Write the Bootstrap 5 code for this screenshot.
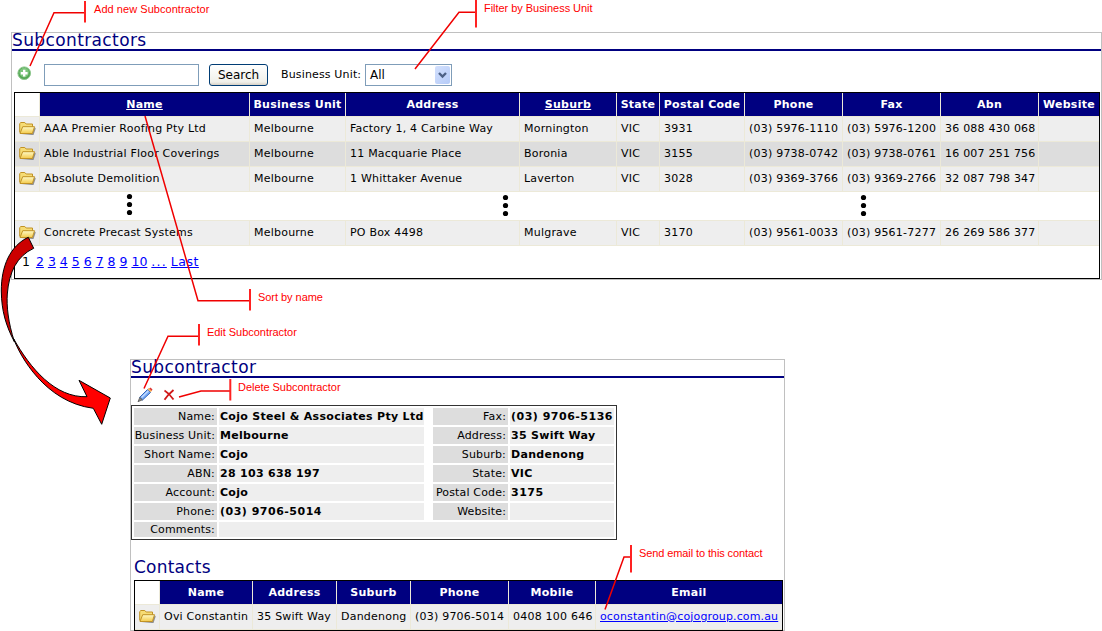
<!DOCTYPE html>
<html lang="en">
<head>
<meta charset="utf-8">
<title>Subcontractors</title>
<link href="https://cdn.jsdelivr.net/npm/bootstrap@5.3.0/dist/css/bootstrap.min.css" rel="stylesheet">
<style>
body{width:1102px;height:631px;overflow:hidden;background:#fff;color:#000;font:11px/14px "DejaVu Sans",sans-serif;letter-spacing:.22px}
a,.table a{color:#00f;text-decoration:underline;text-underline-offset:1px}
.panel{border:1px solid #c0c0c0}
.main-panel{width:1091px;height:248px;margin:32px 0 0 11px}
.sub-panel{width:655px;height:272px;margin:79px 0 0 130px}
.panel-title{font-size:17px;line-height:14px;height:18px;color:#000080;border-bottom:2px solid #000080;margin:0;font-weight:400;letter-spacing:.38px;white-space:nowrap}
.tools{height:41px;padding-left:5px}
.tool-row{height:22px;margin-top:7px}
.search-box{width:155px;height:22px;border:1px solid #7f9db9;border-radius:0;padding:0 3px;margin-left:12px}
.search-btn{width:59px;height:22px;margin-left:10px;padding:0;border:1px solid #003c74;border-radius:3px;background:linear-gradient(#fff,#f0f0ea 85%,#d6d0c5);font-size:12px;line-height:18px;color:#000;letter-spacing:0}
.unit-label{margin-left:13px;width:80px;letter-spacing:.15px;white-space:nowrap}
.unit-select{width:87px;height:22px;border:1px solid #7f9db9;margin-left:4px;padding:1px 1px 1px 4px;font-size:12px;letter-spacing:0}
.drop{width:15px;height:18px;border-radius:2px;background:linear-gradient(135deg,#d3e0fd,#b5cbf8)}
table.listing{table-layout:fixed;border-collapse:separate;border-spacing:0;border:1px solid #000;margin:0;color:#000}
table.listing>*>*>*{padding:0 0 1px 4px;border-width:0 1px 1px 0;border-style:solid;border-color:#ece9d8;vertical-align:middle;white-space:nowrap;height:25px;line-height:14px;box-shadow:none;color:#000}
table.listing>*>*>*:last-child{border-right:0}
table.listing>thead>tr>th{height:24px;background:#000080;color:#fff;text-align:center;padding:1px 0 0;font-weight:700;letter-spacing:.28px}
table.listing>thead>tr>th:first-child{background:#fff}
table.listing>thead a{color:#fff}
table.listing .r>td{background:#eee}
table.listing .alt>td{background:#ddd}
table.listing .skip>td{height:29px;border-right:0;padding:0}
table.listing .pager>td{height:32px;border:0;padding:0 0 0 7px;font-size:12.5px;letter-spacing:0}
table.listing svg{display:block}
.mail{letter-spacing:.14px}
.details{width:486px;height:135px;border:1px solid #333;padding:2px;display:grid;grid-template-columns:83px 205px 5px 75px 104px;grid-template-rows:repeat(6,17px) 15px;gap:2px;line-height:18px;white-space:nowrap}
.lab{background:#ddd;text-align:right;padding-right:2px;letter-spacing:.16px}
.val{background:#eee;font-weight:700;padding-left:1px;letter-spacing:.3px}
.num{letter-spacing:.5px}
.last-line{line-height:16px}
.wide{grid-column:2 / span 4}
.sub-title{font-size:17px;line-height:20px;color:#000080;margin:17px 0 3px 3px;font-weight:400}
.note{position:absolute;color:#f00;font:11px/12px "Liberation Sans",sans-serif;white-space:nowrap;letter-spacing:-.04px}
</style>
</head>
<body class="position-relative">
<svg width="0" height="0" class="position-absolute">
<defs>
<linearGradient id="gold" x1="0" y1="0" x2="0" y2="1"><stop offset="0" stop-color="#fffbc8"/><stop offset="1" stop-color="#f3c94a"/></linearGradient>
<symbol id="folder" viewBox="0 0 17 15">
<path d="M2.500 14h12l2.200-6.500-1-1.500L13 13z" fill="#777" opacity=".8"/>
<path d="M.7 11.500V2.600L1.800 1.500h4L7.200 3h6.300v3" fill="#f6dc75" stroke="#c19224"/>
<path d="M1 12.500 3.700 5.700h11.800L13.400 12.500z" fill="url(#gold)" stroke="#c19224"/>
</symbol>
</defs>
</svg>

<section class="panel main-panel">
<h1 class="panel-title">Subcontractors</h1>
<div class="tools d-flex align-items-center">
<div class="tool-row d-flex align-items-center">
<svg width="15" height="15" viewBox="0 0 15 15" style="margin-top:-4px"><circle cx="7.2" cy="7.2" r="6.3" fill="#52a552" stroke="#8cc78c"/><circle cx="7.2" cy="6.600" r="4.800" fill="#7cc47c"/><path d="M7.200 3.800v6.800M3.800 7.200h6.800" stroke="#fff" stroke-width="2.400"/></svg>
<input class="search-box" type="text" aria-label="Search">
<button class="search-btn" type="button">Search</button>
<span class="unit-label">Business Unit:</span>
<div class="unit-select d-flex justify-content-between align-items-center"><span>All</span><span class="drop"><svg class="d-block" width="15" height="18" viewBox="0 0 15 18"><path d="m4 7 3.500 3.500L11 7" fill="none" stroke="#4d6185" stroke-width="2.400"/></svg></span></div>
</div>
</div>
<table class="table listing" style="width:1086px;margin-left:2px">
<colgroup><col style="width:25px"><col style="width:210px"><col style="width:96px"><col style="width:174px"><col style="width:97px"><col style="width:43px"><col style="width:85px"><col style="width:98px"><col style="width:98px"><col style="width:98px"><col style="width:60px"></colgroup>
<thead><tr><th></th><th><a href="#">Name</a></th><th>Business Unit</th><th>Address</th><th><a href="#">Suburb</a></th><th>State</th><th>Postal Code</th><th>Phone</th><th>Fax</th><th>Abn</th><th>Website</th></tr></thead>
<tbody>
<tr class="r"><td><svg width="17" height="15"><use href="#folder"/></svg></td><td>AAA Premier Roofing Pty Ltd</td><td>Melbourne</td><td>Factory 1, 4 Carbine Way</td><td>Mornington</td><td>VIC</td><td>3931</td><td>(03) 5976-1110</td><td>(03) 5976-1200</td><td>36 088 430 068</td><td></td></tr>
<tr class="alt"><td><svg width="17" height="15"><use href="#folder"/></svg></td><td>Able Industrial Floor Coverings</td><td>Melbourne</td><td>11 Macquarie Place</td><td>Boronia</td><td>VIC</td><td>3155</td><td>(03) 9738-0742</td><td>(03) 9738-0761</td><td>16 007 251 756</td><td></td></tr>
<tr class="r"><td><svg width="17" height="15"><use href="#folder"/></svg></td><td>Absolute Demolition</td><td>Melbourne</td><td>1 Whittaker Avenue</td><td>Laverton</td><td>VIC</td><td>3028</td><td>(03) 9369-3766</td><td>(03) 9369-2766</td><td>32 087 798 347</td><td></td></tr>
<tr class="skip"><td colspan="11"><svg width="1084" height="28" viewBox="0 0 1084 28"><g id="dots"><circle cx="114.500" cy="4.500" r="2.600"/><circle cx="114.500" cy="12.500" r="2.600"/><circle cx="114.500" cy="20.500" r="2.600"/></g><use href="#dots" x="376" y="1"/><use href="#dots" x="734" y="1"/></svg></td></tr>
<tr class="r"><td><svg width="17" height="15"><use href="#folder"/></svg></td><td>Concrete Precast Systems</td><td>Melbourne</td><td>PO Box 4498</td><td>Mulgrave</td><td>VIC</td><td>3170</td><td>(03) 9561-0033</td><td>(03) 9561-7277</td><td>26 269 586 377</td><td></td></tr>
<tr class="pager"><td colspan="11"><span style="margin-right:2px">1</span> <a href="#">2</a> <a href="#">3</a> <a href="#">4</a> <a href="#">5</a> <a href="#">6</a> <a href="#">7</a> <a href="#">8</a> <a href="#">9</a> <a href="#">10</a> <a href="#" style="letter-spacing:1.200px">...</a> <a href="#" style="letter-spacing:.5px">Last</a></td></tr>
</tbody>
</table>
</section>

<section class="panel sub-panel">
<h2 class="panel-title">Subcontractor</h2>
<div class="d-flex align-items-center" style="height:27px;padding:6px 0 0 6px">
<svg width="16" height="16" viewBox="0 0 16 16"><path d="M2.500 10.500 10.500 2.500 13.500 5.500 5.500 13z" fill="#76a9f5" stroke="#3467bd"/><path d="M4.500 10.500 11.500 3.800" stroke="#c4dcff" stroke-width="1.400"/><path d="M2.800 10.500 1 14.700l4.400-1.900z" fill="#888" stroke="#555" stroke-width=".8"/><path d="m10.500 2.300 1.500-1.500L15 3.500l-1.400 1.700z" fill="#f7b65d"/><path d="m13 1 2 2.200" stroke="#d33" stroke-width="1.600"/></svg>
<svg width="12" height="12" viewBox="0 0 12 12" style="margin-left:10px"><path d="M1.500 1.500C4 3 8 7 10.500 10.500M10.500 1C7 4 4 7 1.500 10.700" fill="none" stroke="#d01818" stroke-width="1.800"/></svg>
</div>
<div class="details">
<div class="lab">Name:</div><div class="val">Cojo Steel &amp; Associates Pty Ltd</div><div></div><div class="lab">Fax:</div><div class="val num">(03) 9706-5136</div>
<div class="lab">Business Unit:</div><div class="val">Melbourne</div><div></div><div class="lab">Address:</div><div class="val">35 Swift Way</div>
<div class="lab">Short Name:</div><div class="val">Cojo</div><div></div><div class="lab">Suburb:</div><div class="val">Dandenong</div>
<div class="lab">ABN:</div><div class="val">28 103 638 197</div><div></div><div class="lab">State:</div><div class="val">VIC</div>
<div class="lab">Account:</div><div class="val">Cojo</div><div></div><div class="lab">Postal Code:</div><div class="val num">3175</div>
<div class="lab">Phone:</div><div class="val num">(03) 9706-5014</div><div></div><div class="lab">Website:</div><div class="val"></div>
<div class="lab last-line">Comments:</div><div class="val wide"></div>
</div>
<h3 class="sub-title">Contacts</h3>
<table class="table listing" style="width:649px;margin-left:3px">
<colgroup><col style="width:25px"><col style="width:93px"><col style="width:84px"><col style="width:74px"><col style="width:98px"><col style="width:87px"><col style="width:186px"></colgroup>
<thead><tr><th></th><th>Name</th><th>Address</th><th>Suburb</th><th>Phone</th><th>Mobile</th><th>Email</th></tr></thead>
<tbody><tr class="r"><td><svg width="17" height="15"><use href="#folder"/></svg></td><td>Ovi Constantin</td><td>35 Swift Way</td><td>Dandenong</td><td>(03) 9706-5014</td><td>0408 100 646</td><td><a class="mail" href="#">oconstantin@cojogroup.com.au</a></td></tr></tbody>
</table>
</section>

<!-- callouts -->
<svg class="position-absolute top-0 start-0" width="1102" height="631" viewBox="0 0 1102 631" style="pointer-events:none">
<g stroke="#000" stroke-width="1" stroke-linejoin="round">
<path d="M28.300 237.300C10 246 1.300 266 1.300 291C1.500 311 6 326 14.500 342C8 322 6.500 306 7.300 294C9 272 17 256 33.700 248.300Z" fill="#c00"/>
<path d="M13.500 338.500C20 356 45 402 93.300 408.300L101.700 424.300L110.300 398L79 380.300L87 396.700C55 398 30 368 13.500 338.500Z" fill="#f00"/>
</g>
<g fill="none" stroke="#f00000" stroke-width="1.500">
<path d="M85 12.800H54L30 66M476 12.300H459L415 69M250 300.800H198L145 116M199 336.300H168L144 388.500M230 391H201L179 397M631 557H624L605 609.500"/>
<path d="M85 1V22.500M476 0V27.500M250 289V310.500M199 324V345.500M230.300 379V400.500M631 545V572.500" stroke="#ff2222" stroke-width="2"/>
</g>
</svg>
<span class="note" style="left:94px;top:3px;letter-spacing:.05px">Add new Subcontractor</span>
<span class="note" style="left:484px;top:2px">Filter by Business Unit</span>
<span class="note" style="left:258px;top:291px">Sort by name</span>
<span class="note" style="left:207px;top:326px">Edit Subcontractor</span>
<span class="note" style="left:238px;top:381px">Delete Subcontractor</span>
<span class="note" style="left:639px;top:547px;letter-spacing:-.1px">Send email to this contact</span>
<script src="https://cdn.jsdelivr.net/npm/bootstrap@5.3.0/dist/js/bootstrap.bundle.min.js"></script>
</body>
</html>
